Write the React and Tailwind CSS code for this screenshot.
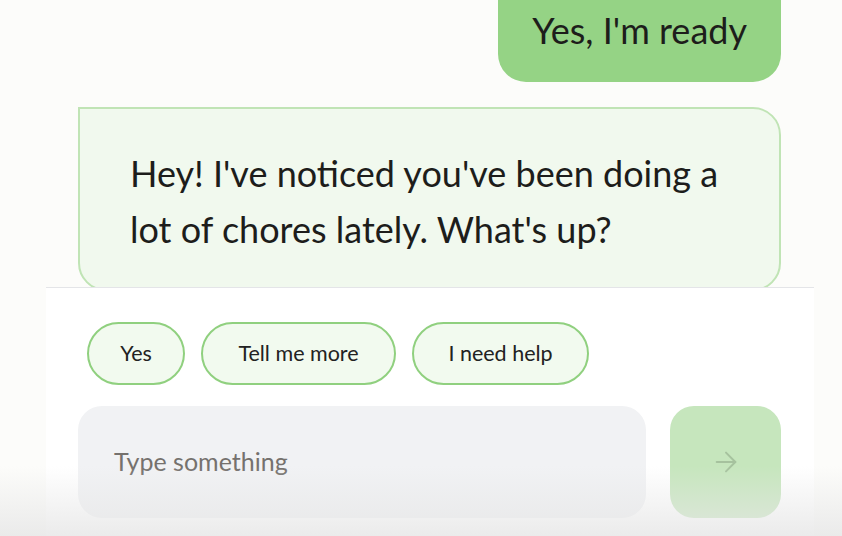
import { ArrowRight } from "lucide-react";

const chips = [
  { label: "Yes", width: "w-[98px]" },
  { label: "Tell me more", width: "w-[195px]" },
  { label: "I need help", width: "w-[177px]" },
];

function App() {
  return (
    <div
      className="relative flex h-[536px] w-[842px] flex-col overflow-hidden bg-[#fcfcfa] text-[#1d1d1b]"
      style={{ fontFamily: "Lato, 'Open Sans', sans-serif" }}
    >
      <div className="h-[287px] shrink-0 overflow-hidden">
        <div className="-mt-[20px] flex flex-col">
          <div className="mr-[61px] h-[102px] self-end rounded-b-[28px] bg-[#95d385] px-[34px] pt-[28px] text-[36px] leading-[44px]">
            Yes, I'm ready
          </div>
          <div className="ml-[78px] mr-[61px] mt-[25px] h-[184px] rounded-[28px] rounded-tl-none border-2 border-[#c0e4b5] bg-[#f1f9ee] pl-[50px] pr-[60px] pt-[36px] text-[36px] leading-[56px]">
            Hey! I've noticed you've been doing a lot of chores lately. What's up?
          </div>
        </div>
      </div>

      <div className="ml-[46px] mr-[28px] flex flex-1 flex-col border-t border-[#e4e5e8] bg-white">
        <div className="mt-[34px] flex gap-[16px] pl-[41px]">
          {chips.map((chip) => (
            <button
              className={`${chip.width} h-[63px] rounded-full border-2 border-[#90d07f] bg-[#f2faef] text-[21.5px] text-[#222]`}
              key={chip.label}
              type="button"
            >
              {chip.label}
            </button>
          ))}
        </div>
        <div className="mt-[21px] flex gap-[24px] pl-[32px] pr-[33px]">
          <div className="flex h-[112px] flex-1 items-center rounded-[24px] bg-[#f1f2f4] pl-[36px] text-[25px] text-[#75716d]">
            Type something
          </div>
          <button
            className="flex h-[112px] w-[111px] items-center justify-center rounded-[24px] bg-[#c6e6bd]"
            type="button"
          >
            <ArrowRight className="h-[32px] w-[32px] text-[#a6c29e]" strokeWidth={1.5} />
          </button>
        </div>
      </div>

      <div className="pointer-events-none absolute inset-x-0 bottom-0 h-[70px] bg-gradient-to-b from-transparent to-[#e6e6e6]/80" />
    </div>
  );
}

export default App;
